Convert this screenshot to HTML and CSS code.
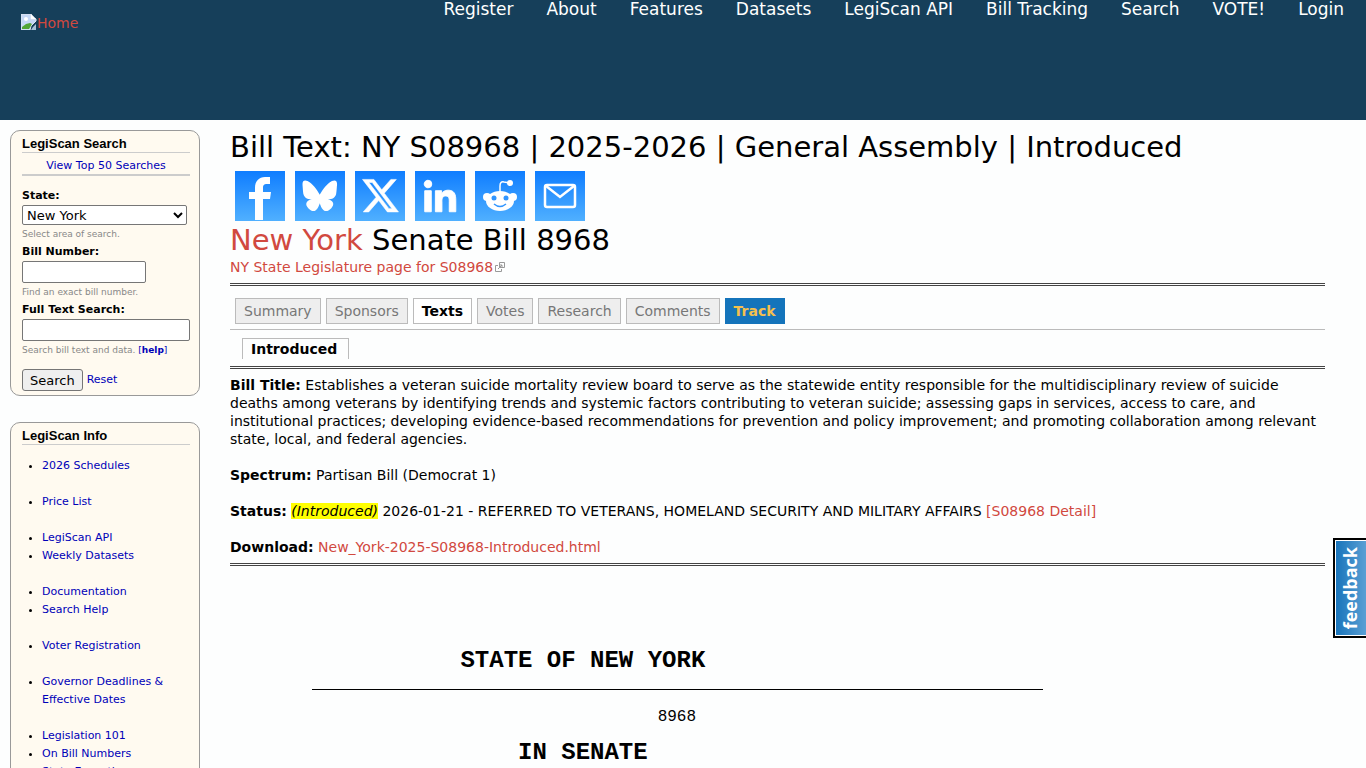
FILE: index.html
```
<!DOCTYPE html>
<html lang="en">
<head>
    <meta charset="UTF-8">
    <meta name="viewport" content="width=device-width, initial-scale=1.0">
    <title>Bill Text: NY S08968 | LegiScan</title>
    <link rel="stylesheet" href="styles.css">
</head>
<body>
    <header class="header">
        <a class="logo" href="#">
            <svg width="16" height="16" viewBox="0 0 16 16" aria-hidden="true">
                <path d="M0 0h10l5 5v2l-3 3-2 2-1 4H0z" fill="#c6d7f5"/>
                <path d="M0 0h10v5h5v2l-3 3-2 2-1 4H0z" fill="none" stroke="#dfe6ee"/>
                <circle cx="5" cy="5" r="2" fill="#fff"/>
                <path d="M1 15v-2l4-3 4-1 2 1-3 5z" fill="#52a535"/>
                <path d="M10 0l5 5h-5z" fill="#fff"/>
                <path d="M15 10v6h-5l2-3z" fill="#a9c3d8"/>
            </svg><span>Home</span>
        </a>
        <nav class="menu">
            <a href="#">Register</a>
            <a href="#">About</a>
            <a href="#">Features</a>
            <a href="#">Datasets</a>
            <a href="#">LegiScan API</a>
            <a href="#">Bill Tracking</a>
            <a href="#">Search</a>
            <a href="#">VOTE!</a>
            <a href="#">Login</a>
        </nav>
    </header>

    <div class="page">
        <aside class="sidebar">
            <section class="block">
                <h2>LegiScan Search</h2>
                <div class="top-searches"><a href="#">View Top 50 Searches</a></div>
                <form class="search-form">
                    <label for="state">State:</label>
                    <select id="state"><option>New York</option></select>
                    <p class="description">Select area of search.</p>
                    <label for="bill-number">Bill Number:</label>
                    <input type="text" id="bill-number" class="short">
                    <p class="description">Find an exact bill number.</p>
                    <label for="full-text">Full Text Search:</label>
                    <input type="text" id="full-text">
                    <p class="description">Search bill text and data. <a href="#">[<b>help</b>]</a></p>
                    <div class="actions"><button type="button">Search</button><a href="#">Reset</a></div>
                </form>
            </section>
            <section class="block">
                <h2>LegiScan Info</h2>
                <ul class="info">
                    <li><a href="#">2026 Schedules</a></li>
                </ul>
                <ul class="info">
                    <li><a href="#">Price List</a></li>
                </ul>
                <ul class="info">
                    <li><a href="#">LegiScan API</a></li>
                    <li><a href="#">Weekly Datasets</a></li>
                </ul>
                <ul class="info">
                    <li><a href="#">Documentation</a></li>
                    <li><a href="#">Search Help</a></li>
                </ul>
                <ul class="info">
                    <li><a href="#">Voter Registration</a></li>
                </ul>
                <ul class="info">
                    <li><a href="#">Governor Deadlines &amp; Effective Dates</a></li>
                </ul>
                <ul class="info">
                    <li><a href="#">Legislation 101</a></li>
                    <li><a href="#">On Bill Numbers</a></li>
                    <li><a href="#">State Executives</a></li>
                </ul>
            </section>
        </aside>

        <main class="content">
            <h1>Bill Text: NY S08968 | 2025-2026 | General Assembly | Introduced</h1>
            <div class="share">
                <a href="#" aria-label="Facebook">
                    <svg viewBox="0 0 50 50"><path d="M20 49V28h-6v-7h6v-4c0-7 4-11 10-11h5v7h-3c-3 0-4 1-4 4v4h8l-1 7h-7v21z"/></svg>
                </a>
                <a href="#" aria-label="Bluesky">
                    <svg viewBox="0 0 50 50"><path transform="translate(7.5 9.5) scale(.54)" d="M13.873 3.805C21.21 9.332 29.103 20.537 32 26.55c2.897-6.013 10.79-17.218 18.127-22.745C55.422-.182 64-3.268 64 6.55c0 1.96-1.12 16.472-1.778 18.828-2.284 8.19-10.609 10.279-18.014 9.015 12.944 2.21 16.236 9.53 9.125 16.85-13.505 13.903-19.411-3.488-20.923-7.944-.28-.823-.41-1.205-.41-.867 0-.338-.13.044-.41.867-1.512 4.456-7.418 21.847-20.923 7.944-7.111-7.32-3.819-14.64 9.125-16.85-7.405 1.264-15.73-.825-18.014-9.015C1.12 23.022 0 8.51 0 6.55 0-3.268 8.579-.182 13.873 3.805Z"/></svg>
                </a>
                <a href="#" aria-label="X">
                    <svg viewBox="0 0 50 50"><path transform="translate(-3.3 -4.2) scale(1.8)" stroke="#fff" stroke-width=".3" d="M21.751 7h3.067l-6.7 7.658L26 25.078h-6.172l-4.833-6.32-5.531 6.32h-3.07l7.167-8.19L6 7h6.328l4.37 5.777L21.75 7Zm-1.076 16.242h1.7L11.404 8.74H9.58l11.094 14.503Z"/></svg>
                </a>
                <a href="#" aria-label="LinkedIn">
                    <svg viewBox="0 0 32 32"><path stroke="#fff" stroke-width=".6" d="M6.227 12.61h4.19v13.48h-4.19zm2.095-6.7a2.43 2.43 0 0 1 0 4.86c-1.344 0-2.428-1.09-2.428-2.43s1.084-2.43 2.428-2.43m4.72 6.7h4.02v1.84h.058c.56-1.058 1.927-2.176 3.965-2.176 4.238 0 5.02 2.792 5.02 6.42v7.395h-4.183v-6.56c0-1.564-.03-3.574-2.178-3.574-2.18 0-2.514 1.7-2.514 3.46v6.668h-4.187z"/></svg>
                </a>
                <a href="#" aria-label="Reddit">
                    <svg viewBox="0 0 50 50">
                        <circle cx="12" cy="26" r="4"/><circle cx="38" cy="26" r="4"/>
                        <ellipse cx="25" cy="30" rx="14" ry="10"/>
                        <circle cx="35" cy="12" r="3"/>
                        <path d="M25 21v-6q0-5 4-4l6 1" fill="none" stroke="#fff" stroke-width="1.5"/>
                        <circle cx="19" cy="27" r="2.5" fill="#3095ff"/><circle cx="31" cy="27" r="2.5" fill="#3095ff"/>
                        <path d="M19 33q6 5 12 0" fill="none" stroke="#3095ff" stroke-width="1.5"/>
                    </svg>
                </a>
                <a href="#" aria-label="Email">
                    <svg viewBox="0 0 50 50"><g fill="none" stroke="#fff" stroke-width="2.5"><rect x="10" y="14" width="30" height="22" rx="2"/><path d="M11 15l14 11 14-11"/></g></svg>
                </a>
            </div>
            <h1><a href="#">New York</a> Senate Bill 8968</h1>
            <p class="source"><a href="#">NY State Legislature page for S08968<svg width="12" height="10" viewBox="0 0 12 10" aria-hidden="true"><path d="M4 3.5H1.5v6h6V7M5.5.5h5v5h-5zM4 7l4-4M5.5 3H8v2.5" fill="none" stroke="#999"/></svg></a></p>

            <nav class="tabs">
                <a href="#">Summary</a>
                <a href="#">Sponsors</a>
                <a href="#" class="active">Texts</a>
                <a href="#">Votes</a>
                <a href="#">Research</a>
                <a href="#">Comments</a>
                <a href="#" class="track">Track</a>
            </nav>
            <nav class="subtabs"><a href="#">Introduced</a></nav>

            <div class="details">
                <p><b>Bill Title:</b> Establishes a veteran suicide mortality review board to serve as the statewide entity responsible for the multidisciplinary review of suicide deaths among veterans by identifying trends and systemic factors contributing to veteran suicide; assessing gaps in services, access to care, and institutional practices; developing evidence-based recommendations for prevention and policy improvement; and promoting collaboration among relevant state, local, and federal agencies.</p>
                <p><b>Spectrum:</b> Partisan Bill (Democrat 1)</p>
                <p><b>Status:</b> <mark>(Introduced)</mark> 2026-01-21 - REFERRED TO VETERANS, HOMELAND SECURITY AND MILITARY AFFAIRS <a href="#">[S08968 Detail]</a></p>
                <p><b>Download:</b> <a href="#">New_York-2025-S08968-Introduced.html</a></p>
            </div>

            <article class="bill">
                <pre class="bill-heading">                STATE OF NEW YORK</pre>
                <div class="bill-rule"></div>
                <pre class="bill-number">                                    8968</pre>
                <pre class="bill-heading">                    IN SENATE</pre>
            </article>
        </main>
    </div>

    <button type="button" class="feedback">feedback</button>
</body>
</html>
```
FILE: styles.css
```
* {
    box-sizing: border-box;
}
body {
    margin: 0;
    height: 100vh;
    overflow: hidden;
    background: #fdfefe;
    color: #000;
    font-family: Verdana, "DejaVu Sans", sans-serif;
    font-size: 14px;
    line-height: 18px;
}
a {
    color: #d1493f;
    text-decoration: none;
}
h1, h2, p, ul, pre {
    margin: 0;
}
.header {
    display: flex;
    justify-content: space-between;
    align-items: flex-start;
    height: 120px;
    padding: 0 22px 0 21px;
    background: #163f5a;
}
.logo {
    display: flex;
    padding-top: 14px;
}
.menu {
    display: flex;
    gap: 33px;
    font-size: 17px;
}
.menu a {
    color: #fff;
}
.page {
    display: flex;
    align-items: flex-start;
    gap: 30px;
    padding: 10px 41px 0 10px;
}

/* left column */
.sidebar {
    flex: 0 0 190px;
    font-size: 11px;
}
.sidebar a {
    color: #0000b8;
}
.block {
    margin-bottom: 26px;
    padding: 4px 9px 4px 11px;
    background: #fffaf0;
    border: 1px solid #999;
    border-radius: 10px;
}
.block h2 {
    border-bottom: 1px solid #ccc;
    font-family: Arial, "Liberation Sans", sans-serif;
    font-size: 13px;
    line-height: 17px;
}
.top-searches {
    padding-top: 5px;
    border-bottom: 2px solid #ccc;
    line-height: 16px;
    text-align: center;
}
.search-form {
    display: flex;
    flex-direction: column;
    align-items: flex-start;
    padding-top: 11px;
}
.search-form label {
    font-weight: bold;
}
.search-form select {
    width: 165px;
    height: 20px;
    padding: 0;
    background: #fff;
    border: 1px solid #767676;
    border-radius: 2px;
    font: 13px Verdana, "DejaVu Sans", sans-serif;
}
.search-form input {
    width: 168px;
    height: 22px;
    border: 1px solid #767676;
    border-radius: 2px;
}
.search-form .short {
    width: 124px;
}
.description {
    color: #888;
    font-size: 9px;
}
.actions {
    display: flex;
    align-items: center;
    gap: 4px;
    padding-top: 10px;
}
.actions button {
    height: 22px;
    padding: 0 7px;
    background: #efefef;
    border: 1px solid #767676;
    border-radius: 3px;
    font: 13px Verdana, "DejaVu Sans", sans-serif;
}
.info {
    padding-left: 20px;
    margin-bottom: 18px;
}
h2 + .info {
    margin-top: 12px;
}

/* main column */
.content {
    flex: 1;
    min-width: 0;
}
h1 {
    font-size: 29px;
    font-weight: normal;
    line-height: 35px;
}
.share {
    display: flex;
    gap: 10px;
    margin-top: 6px;
    padding-left: 5px;
}
.share a {
    width: 50px;
    height: 50px;
    background: linear-gradient(#0f7dff, #50b0ff);
}
.share svg {
    display: block;
    width: 50px;
    height: 50px;
    fill: #fff;
}
.share + h1 {
    margin-top: 2px;
}
.source {
    padding-bottom: 7px;
    border-bottom: 3px double #444;
}
.source svg {
    margin-left: 1px;
}
.tabs {
    display: flex;
    gap: 5px;
    padding: 12px 5px 5px;
    border-bottom: 1px solid #bbb;
}
.tabs a {
    padding: 3px 8px;
    background: #eee;
    border: 1px solid #bbb;
    color: #777;
}
.tabs .active {
    background: #fff;
    color: #000;
    font-weight: bold;
}
.tabs .track {
    background: #1474bb;
    border-color: #1474bb;
    color: #f4c04e;
    font-weight: bold;
}
.subtabs {
    display: flex;
    padding: 8px 12px 7px;
    border-bottom: 3px double #444;
}
.subtabs a {
    padding: 1px 11px 1px 8px;
    border: 1px solid #bbb;
    border-bottom: 0;
    color: #000;
    font-weight: bold;
}
.details {
    display: flex;
    flex-direction: column;
    gap: 18px;
    padding: 7px 0;
    border-bottom: 3px double #444;
}
mark {
    background: #ff0;
    font-style: italic;
}

/* bill text */
.bill {
    padding-top: 81px;
}
.bill pre {
    font-family: "Courier New", "Liberation Mono", monospace;
}
.bill .bill-heading {
    font-size: 24px;
    font-weight: bold;
    line-height: 28px;
}
.bill-rule {
    width: 731px;
    max-width: 100%;
    margin: 14px 0 18px 82px;
    border-top: 1px solid #000;
}
.bill .bill-number {
    margin: 0 0 13px 82px;
    font-size: 16px;
}
.feedback {
    position: fixed;
    right: 0;
    top: 538px;
    width: 33px;
    height: 100px;
    padding: 0 2px 0 0;
    background: linear-gradient(90deg, #1673ba, #5a9fd4);
    border: 2px solid #000;
    border-right: 0;
    box-shadow: inset 1px 1px #fff, inset 0 -1px #fff;
    color: #fff;
    font: bold 18px "Open Sans", sans-serif;
    writing-mode: sideways-lr;
}
```
